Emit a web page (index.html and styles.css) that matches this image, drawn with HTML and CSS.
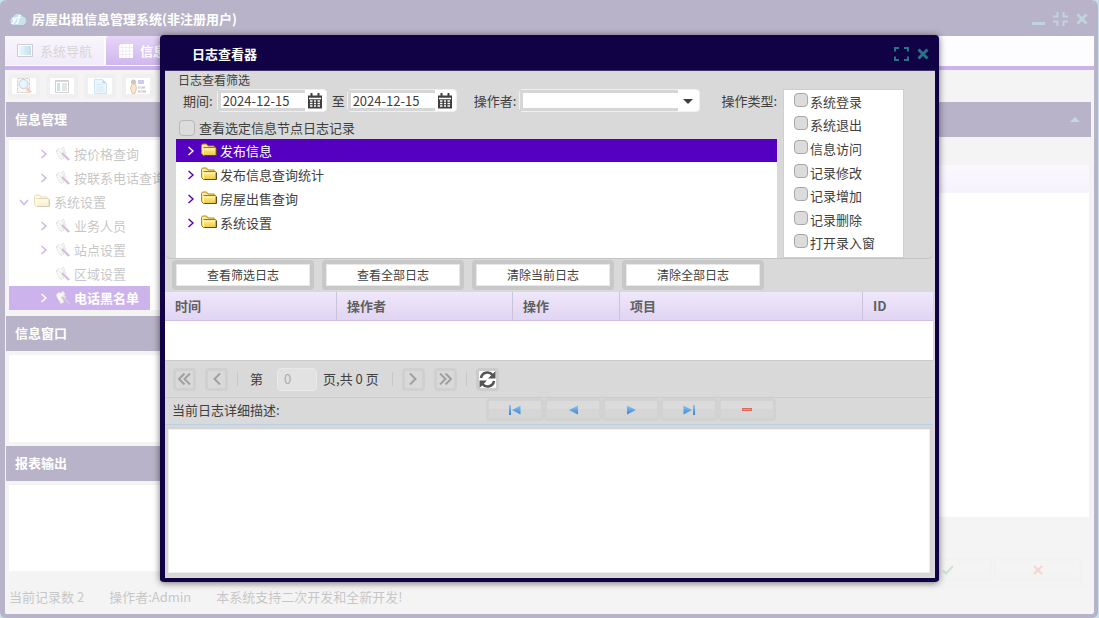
FILE: index.html
```html
<!DOCTYPE html>
<html lang="zh-CN">
<head>
<meta charset="utf-8">
<title>房屋出租信息管理系统</title>
<link rel="stylesheet" href="styles.css">
</head>
<body>
<svg class="defs" aria-hidden="true">
  <defs>
    <linearGradient id="gold" x1="0" y1="0" x2="0" y2="1"><stop offset="0" stop-color="#fff3a8"/><stop offset="1" stop-color="#f0c93c"/></linearGradient>
    <linearGradient id="blue" x1="0" y1="0" x2="0" y2="1"><stop offset="0" stop-color="#8cc4f4"/><stop offset="1" stop-color="#3b86d0"/></linearGradient>
    <linearGradient id="screen" x1="0" y1="0" x2="1" y2="0"><stop offset="0" stop-color="#b5e4f5"/><stop offset="1" stop-color="#3f91bd"/></linearGradient>
    <symbol id="folder" viewBox="0 0 16 16">
      <path d="M.5 10.500v-8l1-1.500h4l1.500 2h6l.5 1.500" fill="#fbe9a0" stroke="#b8860b"/>
      <path d="M2.500 4.500h12l.5 1v6l-1 1H2.500l-2-2" fill="url(#gold)" stroke="#a87a14"/>
      <path d="M2.500 5.500v6M4.500 6.500h9" stroke="#fff6c4" fill="none"/>
      <path d="M15.500 5.500v7h-12" stroke="#5d4a1c" fill="none"/>
    </symbol>
    <symbol id="chev-r" viewBox="0 0 8 10"><path d="M1.500 1l4.500 4-4.500 4" fill="none" stroke="currentColor" stroke-width="1.400"/></symbol>
    <symbol id="chev-d" viewBox="0 0 10 8"><path d="M1 2l4 4.500L9 2" fill="none" stroke="currentColor" stroke-width="1.400"/></symbol>
    <symbol id="wand" viewBox="0 0 16 16">
      <path d="M1 5l3-3 1 2 3-3 2 3-1 2 2 1-3 3 1 2-3 2-3-5z" fill="#d6d6d6" stroke="#888" stroke-dasharray="1.500 1"/>
      <path d="M3 6l2 4M4 3l3 2" stroke="#fff"/>
      <path d="M7 7l7 7" stroke="#333" stroke-width="2"/><path d="M8 7l6.500 6.500" stroke="#a03ce0" stroke-width="1.200"/>
    </symbol>
    <symbol id="calendar" viewBox="0 0 16 16">
      <path d="M1 2.500h14v13H1z" fill="#404040"/><path d="M3.500 0h2v4h-2zM10.500 0h2v4h-2z" fill="#404040"/>
      <path d="M2 5.500h12M3 8h2.500M7 8h2M10.500 8H13M3 10.500h2.500M7 10.500h2M10.500 10.500H13M3 13h2.500M7 13h2M10.500 13H13" stroke="#fff" stroke-width="1.400"/>
    </symbol>
    <symbol id="close" viewBox="0 0 12 12"><path d="M1.500 1.500l9 9M10.500 1.500l-9 9" stroke="currentColor" stroke-width="3"/></symbol>
  </defs>
</svg>

<div class="window">
  <header class="titlebar">
    <svg class="logo" viewBox="0 0 16 14"><path d="M4 13a3.800 3.800 0 0 1-.5-7.500 4.800 4.800 0 0 1 8.800-1 4.300 4.300 0 0 1 .2 8.500z" fill="#4ba0c0"/><text class="logo-text" x="2" y="10">yf</text></svg>
    <h1>房屋出租信息管理系统(非注册用户)</h1>
    <div class="controls">
      <button aria-label="最小化"><svg width="13" height="14" viewBox="0 0 13 14"><path d="M0 10h13v3H0z" fill="currentColor"/></svg></button>
      <button aria-label="还原"><svg width="15" height="14" viewBox="0 0 15 14"><path d="M0 4.500h4.500V0M10.500 0v4.500H15M0 9.500h4.500V14M10.500 14V9.500H15" fill="none" stroke="currentColor" stroke-width="2"/></svg></button>
      <button aria-label="关闭"><svg width="12" height="12"><use href="#close"/></svg></button>
    </div>
  </header>
  <nav class="tabs">
    <button class="tab"><svg width="16" height="13" viewBox="0 0 16 13"><path d="M.5.5h15v12H.5z" fill="#fff" stroke="#556"/><path d="M2 2h12v9H2z" fill="url(#screen)"/></svg>系统导航</button>
    <button class="tab active"><svg width="14" height="14" viewBox="0 0 14 14"><path d="M2 0h12v14H0V2z" fill="#fff"/><path d="M3.500 0v14M7 0v14M10.500 0v14M0 3.500h14M0 7h14M0 10.500h14" stroke="#c8c4d0" stroke-width="1"/></svg>信息管理</button>
  </nav>
  <div class="toolbar">
    <button aria-label="查找"><svg width="16" height="16" viewBox="0 0 16 16"><path d="M1.500.5h12v14h-12z" fill="#e4e4e4" stroke="#666" stroke-dasharray="3 1"/><circle cx="7.500" cy="6" r="4.500" fill="#a4e2f4" stroke="#555"/><path d="M10.500 10l4 4.500" stroke="#d8583a" stroke-width="3"/></svg></button>
    <button aria-label="列表"><svg width="14" height="13" viewBox="0 0 14 13"><path d="M.5.5h13v12H.5z" fill="#fff" stroke="#666"/><path d="M1 1.500h12" stroke="#888"/><path d="M2 3h3v8H2z" fill="#5594c4"/><path d="M7 4h5M7 6h5M7 8h5M7 10h5" stroke="#555"/></svg></button>
    <button aria-label="文档"><svg width="13" height="15" viewBox="0 0 13 15"><path d="M.5.5h8l4 4v10H.5z" fill="#b5e0f8" stroke="#64a8d8"/><path d="M8.500.5v4h4" fill="#2a80c0"/><path d="M2.500 5.500h6M2.500 8h8M2.500 10h8M2.500 12h8" stroke="#72b6e0"/></svg></button>
    <button aria-label="人员"><svg width="16" height="15" viewBox="0 0 16 15"><circle cx="3.500" cy="3" r="2.500" fill="#444"/><path d="M2 5h3.500l1 4-1.500 5.500H2L.5 9z" fill="#eda83a" stroke="#7c5a20"/><path d="M8 1h6v4H8z" fill="#5b4fd0"/><path d="M8 8.500h7M8 12.500h8" stroke="#555" stroke-width="2"/><path d="M9 8.500h3M10 12.500h3" stroke="#aaa"/></svg></button>
  </div>
  <div class="workspace">
    <aside class="sidebar">
      <h2 class="panel-title">信息管理</h2>
      <ul class="tree main-tree">
        <li class="lvl2"><svg class="arrow"><use href="#chev-r"/></svg><svg class="leaf"><use href="#wand"/></svg>按价格查询</li>
        <li class="lvl2"><svg class="arrow"><use href="#chev-r"/></svg><svg class="leaf"><use href="#wand"/></svg>按联系电话查询</li>
        <li class="lvl1"><svg class="arrow down"><use href="#chev-d"/></svg><svg class="folder"><use href="#folder"/></svg>系统设置</li>
        <li class="lvl2"><svg class="arrow"><use href="#chev-r"/></svg><svg class="leaf"><use href="#wand"/></svg>业务人员</li>
        <li class="lvl2"><svg class="arrow"><use href="#chev-r"/></svg><svg class="leaf"><use href="#wand"/></svg>站点设置</li>
        <li class="lvl2"><svg class="arrow"></svg><svg class="leaf"><use href="#wand"/></svg>区域设置</li>
        <li class="lvl2 selected"><svg class="arrow"><use href="#chev-r"/></svg><svg class="leaf"><use href="#wand"/></svg>电话黑名单</li>
      </ul>
      <h2 class="panel-title">信息窗口</h2>
      <div class="side-body"></div>
      <h2 class="panel-title">报表输出</h2>
      <div class="side-body"></div>
    </aside>
    <main class="content">
      <div class="panel-title content-title"><svg width="10" height="5" viewBox="0 0 10 5"><path d="M0 5l5-5 5 5z" fill="#2f7d94"/></svg></div>
      <div class="content-body">
        <div class="list-head"></div>
        <div class="list-area"></div>
        <div class="form-actions">
          <button class="ghost" aria-label="确定"><svg width="12" height="10" viewBox="0 0 12 10"><path d="M1 5.500L4 8.500 11 1" fill="none" stroke="#50a860" stroke-width="2"/></svg></button>
          <button class="ghost" aria-label="取消"><svg width="10" height="10" viewBox="0 0 10 10"><path d="M1 1l8 8M9 1L1 9" stroke="#e8695c" stroke-width="2"/></svg></button>
        </div>
      </div>
    </main>
  </div>
  <footer class="status"><span>当前记录数 2</span><span>操作者:Admin</span><span>本系统支持二次开发和全新开发!</span></footer>
</div>

<div class="mask"></div>

<section class="dialog" role="dialog" aria-labelledby="dlg-title">
  <header class="dialog-head">
    <h2 id="dlg-title">日志查看器</h2>
    <div class="controls">
      <button aria-label="最大化"><svg width="15" height="14" viewBox="0 0 15 14"><path d="M1 4.500V1h4M10 1h4v3.500M1 9.500V13h4M10 13h4V9.500" fill="none" stroke="currentColor" stroke-width="2"/></svg></button>
      <button aria-label="关闭"><svg width="12" height="12"><use href="#close"/></svg></button>
    </div>
  </header>
  <div class="dialog-body">
    <section class="filter">
      <h3>日志查看筛选</h3>
      <div class="filter-grid">
        <div class="filter-left">
          <div class="fields">
            <label for="from">期间:</label>
            <span class="field date"><input id="from" type="text" value="2024-12-15"><button aria-label="选择开始日期"><svg width="16" height="16"><use href="#calendar"/></svg></button></span>
            <label for="to">至</label>
            <span class="field date"><input id="to" type="text" value="2024-12-15"><button aria-label="选择结束日期"><svg width="16" height="16"><use href="#calendar"/></svg></button></span>
            <label class="operator" for="op">操作者:</label>
            <span class="field combo"><select id="op"><option></option></select><svg width="10" height="5" viewBox="0 0 10 5"><path d="M0 0h10L5 5z" fill="#404040"/></svg></span>
            <span class="type-label">操作类型:</span>
          </div>
          <label class="check node-check"><input type="checkbox">查看选定信息节点日志记录</label>
          <ul class="tree log-tree">
            <li class="selected"><svg class="arrow"><use href="#chev-r"/></svg><svg class="folder"><use href="#folder"/></svg>发布信息</li>
            <li><svg class="arrow"><use href="#chev-r"/></svg><svg class="folder"><use href="#folder"/></svg>发布信息查询统计</li>
            <li><svg class="arrow"><use href="#chev-r"/></svg><svg class="folder"><use href="#folder"/></svg>房屋出售查询</li>
            <li><svg class="arrow"><use href="#chev-r"/></svg><svg class="folder"><use href="#folder"/></svg>系统设置</li>
          </ul>
        </div>
        <div class="types">
          <label class="check"><input type="checkbox">系统登录</label>
          <label class="check"><input type="checkbox">系统退出</label>
          <label class="check"><input type="checkbox">信息访问</label>
          <label class="check"><input type="checkbox">记录修改</label>
          <label class="check"><input type="checkbox">记录增加</label>
          <label class="check"><input type="checkbox">记录删除</label>
          <label class="check"><input type="checkbox">打开录入窗</label>
        </div>
      </div>
    </section>
    <div class="actions">
      <button>查看筛选日志</button>
      <button>查看全部日志</button>
      <button>清除当前日志</button>
      <button>清除全部日志</button>
    </div>
    <div class="grid">
      <table>
        <colgroup><col class="c-time"><col class="c-user"><col class="c-op"><col><col class="c-id"></colgroup>
        <thead><tr><th>时间</th><th>操作者</th><th>操作</th><th>项目</th><th>ID</th></tr></thead>
      </table>
    </div>
    <div class="pager">
      <button disabled aria-label="首页"><svg width="13" height="12" viewBox="0 0 13 12"><path d="M6.500 0.500L1 6l5.500 5.500M12 .5L6.500 6l5.500 5.500" fill="none" stroke="currentColor" stroke-width="2"/></svg></button>
      <button disabled aria-label="上一页"><svg width="8" height="12" viewBox="0 0 8 12"><path d="M7 .5L1.500 6 7 11.500" fill="none" stroke="currentColor" stroke-width="2"/></svg></button>
      <i class="sep"></i>
      <label for="page">第</label>
      <input id="page" type="text" value="0" disabled>
      <span class="total">页,共 0 页</span>
      <i class="sep"></i>
      <button disabled aria-label="下一页"><svg width="8" height="12" viewBox="0 0 8 12"><path d="M1 .5L6.500 6 1 11.500" fill="none" stroke="currentColor" stroke-width="2"/></svg></button>
      <button disabled aria-label="末页"><svg width="13" height="12" viewBox="0 0 13 12"><path d="M1 .5L6.500 6 1 11.500M6.500 .5L12 6l-5.500 5.500" fill="none" stroke="currentColor" stroke-width="2"/></svg></button>
      <i class="sep"></i>
      <button class="refresh" aria-label="刷新"><svg width="17" height="17" viewBox="0 0 17 17"><path d="M2 7a6.500 6.500 0 0 1 11.500-3M15 10a6.500 6.500 0 0 1-11.500 3" fill="none" stroke="#555" stroke-width="2.600"/><path d="M16.500 0v7.500H9zM.5 17V9.500H8z" fill="#555"/></svg></button>
    </div>
    <div class="detail-bar">
      <label for="detail">当前日志详细描述:</label>
      <div class="nav">
        <button class="ghost" aria-label="第一条"><svg width="12" height="10" viewBox="0 0 12 10"><path d="M0 0h2v10H0zM11.500 .5v9L3 5z" fill="url(#blue)"/></svg></button>
        <button class="ghost" aria-label="上一条"><svg width="9" height="10" viewBox="0 0 9 10"><path d="M9 .5v9L0 5z" fill="url(#blue)"/></svg></button>
        <button class="ghost" aria-label="下一条"><svg width="9" height="10" viewBox="0 0 9 10"><path d="M0 .5v9L9 5z" fill="url(#blue)"/></svg></button>
        <button class="ghost" aria-label="最后一条"><svg width="12" height="10" viewBox="0 0 12 10"><path d="M10 0h2v10h-2zM.5 .5v9L9 5z" fill="url(#blue)"/></svg></button>
        <button class="ghost" aria-label="删除"><svg width="10" height="3" viewBox="0 0 10 3"><path d="M0 0h10v3H0z" fill="#dd6a58"/><path d="M1 1.500h8" stroke="#ee9a68"/></svg></button>
      </div>
    </div>
    <textarea id="detail"></textarea>
  </div>
</section>
</body>
</html>
```
FILE: styles.css
```css
* { box-sizing: border-box; }

html, body { height: 100%; }

body {
  margin: 0;
  overflow: hidden;
  background: #3f9ab8;
  color: #404040;
  font: 13px/24px "Noto Sans CJK SC", sans-serif;
}

h1, h2, h3, ul { margin: 0; padding: 0; font-size: 13px; }
ul { list-style: none; }
svg { display: block; flex: none; }
button, input, select, textarea { font: inherit; color: inherit; margin: 0; }
button { display: flex; align-items: center; justify-content: center; padding: 0; border: 0; background: none; }
.defs { position: absolute; width: 0; height: 0; }

/* Main window */
.window {
  display: flex;
  flex-direction: column;
  height: 100%;
  margin-right: 1px;
  border: solid #110246;
  border-width: 0 4px 4px 5px;
  border-radius: 6px;
  background: #d9d9d9;
  overflow: hidden;
}

.titlebar {
  display: flex;
  align-items: center;
  height: 36px;
  padding: 2px 6px 0 5px;
  background: #110246;
  color: #fff;
}

.logo { width: 16px; height: 14px; margin-right: 6px; }
.logo-text { font: italic bold 9px "Open Sans", sans-serif; fill: #fff; }
.controls { display: flex; gap: 8px; margin-left: auto; color: #2a7287; }

.tabs {
  display: flex;
  gap: 2px;
  height: 34px;
  border-bottom: 4px solid #5500c0;
  background: #f8f5fb;
}

.tab {
  gap: 7px;
  width: 99px;
  height: 29px;
  border-radius: 3px 3px 0 0;
  background: linear-gradient(#ebdff8, #cfbcec);
  color: #707070;
}
.tab.active { background: linear-gradient(#ac73e1, #5d12c6); color: #fff; font-weight: bold; }

.toolbar { display: flex; gap: 6px; height: 32px; padding: 4px 3px; }
.toolbar button {
  width: 32px;
  height: 24px;
  border: 4px solid #cccccc;
  border-radius: 4px;
  background: #fff;
}

.workspace { display: flex; flex: 1; min-height: 0; padding: 0 3px 0 1px; }
.sidebar { display: flex; flex-direction: column; width: 184px; }

.panel-title {
  flex: none;
  height: 35px;
  padding-left: 9px;
  background: #110246;
  color: #fff;
  line-height: 34px;
}

.tree { background: #fff; }
.tree li { display: flex; align-items: center; height: 24px; white-space: nowrap; }
.tree .arrow { width: 8px; height: 10px; color: #5500c0; }
.tree .arrow.down { width: 10px; height: 8px; }
.tree .folder, .tree .leaf { width: 16px; height: 16px; }
.tree .selected, .tree .selected .arrow { color: #fff; }
.tree .selected { background: #5500c0; }

.main-tree { margin: 3px 0 6px 3px; padding-top: 2px; }
.main-tree li { line-height: 22px; }
.main-tree .lvl1 { gap: 4px; padding-left: 10px; }
.main-tree .lvl2 { gap: 3px; padding-left: 31px; }
.main-tree .leaf { margin-left: 4px; }
.main-tree .folder { margin-left: 1px; }
.main-tree .selected { width: 141px; font-weight: bold; }

.side-body { flex: 1; margin: 4px 0 4px 3px; background: #fff; }
.side-body:last-child { margin-bottom: 15px; }

.content { display: flex; flex: 1; flex-direction: column; margin-left: 4px; }
.content-title { display: flex; align-items: center; justify-content: flex-end; padding-right: 11px; }
.content-body { display: flex; flex: 1; flex-direction: column; padding: 28px 1px 0 0; border: solid #d0d0d0; border-width: 0 1px 1px 0; }
.list-head { height: 28px; background: linear-gradient(#efe7fa, #e1d5f3); }
.list-area { flex: 1; background: #fff; }
.form-actions { display: flex; justify-content: flex-end; gap: 1px; height: 68px; padding: 41px 7px 4px; }
.form-actions .ghost { width: 89px; }

.ghost {
  border: 3px solid #d2d2d2;
  border-radius: 4px;
  background: linear-gradient(#dbdbdb 50%, #d6d6d6 50%);
}

.status { display: flex; gap: 25px; height: 28px; padding-left: 4px; line-height: 22px; }

.mask { position: absolute; inset: 0; background: rgba(255, 255, 255, 0.7); }

/* Log viewer dialog */
.dialog {
  position: absolute;
  inset: 35px 160px 36px 160px;
  display: flex;
  flex-direction: column;
  border: solid #110246;
  border-width: 0 4px 4px 5px;
  border-radius: 4px;
  background: #d9d9d9;
  box-shadow: 0 1px 7px rgba(0, 0, 0, 0.55);
}

.dialog-head {
  display: flex;
  align-items: center;
  flex: none;
  height: 36px;
  padding: 2px 6px 0 27px;
  border-bottom: 1px solid #3f2f6b;
  background: #110246;
  color: #fff;
}

.dialog-body { display: flex; flex: 1; flex-direction: column; min-height: 0; padding-right: 2px; }

.filter { padding: 0 0 0 11px; border-bottom: 1px solid #c4c4c4; border-radius: 0 0 6px 6px; }
.filter h3 { padding-left: 2px; font-size: 12px; font-weight: normal; line-height: 18px; }
.filter-grid { display: flex; gap: 6px; }
.filter-left { display: flex; flex-direction: column; width: 601px; }

.fields { display: flex; align-items: center; height: 23px; padding-left: 7px; }
.fields label { margin-right: 4px; white-space: nowrap; }
.fields .date + label { margin-left: 5px; margin-right: 2px; }
.fields .date + .operator { margin-left: 17px; margin-right: 3px; }
.type-label { margin-left: auto; }

.field {
  display: flex;
  height: 23px;
  border: 1px solid #f0f0f0;
  border-radius: 4px;
  background: #fff;
}
.field input, .field select {
  flex: 1;
  min-width: 0;
  border: solid #d6d6d6;
  border-width: 3px 0 3px 3px;
  padding: 0 0 0 2px;
  background: #fff;
  outline: 0;
}
.field button { width: 21px; }
.date { width: 110px; }
.combo { position: relative; width: 181px; }
.combo select { appearance: none; margin-right: 21px; border-radius: 0; }
.combo svg { position: absolute; right: 6px; top: 9px; pointer-events: none; }

.check { display: flex; align-items: center; gap: 3px; }
.check input {
  appearance: none;
  width: 14px;
  height: 14px;
  border: 1px solid #a8a8a8;
  border-radius: 4px;
  background: #dcdcdc;
}
.node-check { gap: 4px; height: 27px; padding: 5px 0 0 3px; }
.node-check input { width: 16px; height: 16px; border-color: #b8b8b8; }

.log-tree { height: 119px; }
.log-tree li { gap: 3px; padding-left: 11px; }
.log-tree .selected { height: 23px; margin-bottom: 1px; }
.log-tree .folder { margin-left: 3px; }

.types {
  display: flex;
  flex-direction: column;
  width: 121px;
  height: 169px;
  padding: 0 0 2px 10px;
  border: 1px solid #cfcfcf;
  background: #fff;
}
.types .check { flex: 1; min-height: 0; gap: 2px; }
.types input { margin-bottom: 4px; }

.actions { display: flex; gap: 8px; padding: 1px 7px 2px; }
.actions button {
  width: 142px;
  height: 30px;
  border: 4px solid #c8c8c8;
  border-radius: 4px;
  background: #fff;
  box-shadow: inset 0 0 0 1px #e8e8e8;
  font-size: 12px;
}

.grid { height: 69px; border-bottom: 1px solid #cccccc; background: #fff; }
.grid table { width: 100%; border-collapse: separate; border-spacing: 0; table-layout: fixed; }
.grid th {
  height: 29px;
  padding: 0 10px;
  border-right: 1px solid #cbc3da;
  border-bottom: 1px solid #cfc0e8;
  background: linear-gradient(#efe7fa, #e1d5f3);
  color: #606060;
  text-align: left;
}
.grid th:last-child { border-right: 0; }
.c-time { width: 172px; }
.c-user { width: 176px; }
.c-op { width: 107px; }
.c-id { width: 70px; }

.pager { display: flex; align-items: center; gap: 9px; height: 37px; padding-left: 8px; border-bottom: 1px solid #cccccc; }
.pager button {
  width: 23px;
  height: 23px;
  border: 3px solid #d0d0d0;
  border-radius: 4px;
  background: #d9d9d9;
  color: #a0a0a0;
}
.pager .refresh { background: #fff; border-color: #cccccc; }
.pager .sep { width: 1px; height: 14px; background: #c8c8c8; }
.pager label { margin: 0 5px 0 3px; }
.pager input {
  width: 40px;
  height: 23px;
  padding: 0 6px;
  border: 1px solid #e8e8e8;
  border-radius: 4px;
  background: #e2e2e2;
  color: #aaaaaa;
}
.pager .total { margin: 0 4px 0 -3px; }

.detail-bar { display: flex; gap: 8px; height: 27px; padding-left: 7px; border-bottom: 1px solid #b8d0e6; }
.detail-bar label { width: 306px; }
.nav { display: flex; }
.nav .ghost { width: 58px; height: 23px; }

textarea {
  flex: 1;
  min-height: 0;
  margin: 1px 0 2px;
  padding: 4px;
  border: 3px solid #d6d6d6;
  box-shadow: inset 0 0 0 1px #eeeeee;
  background: #fff;
  outline: 0;
  resize: none;
}
```
